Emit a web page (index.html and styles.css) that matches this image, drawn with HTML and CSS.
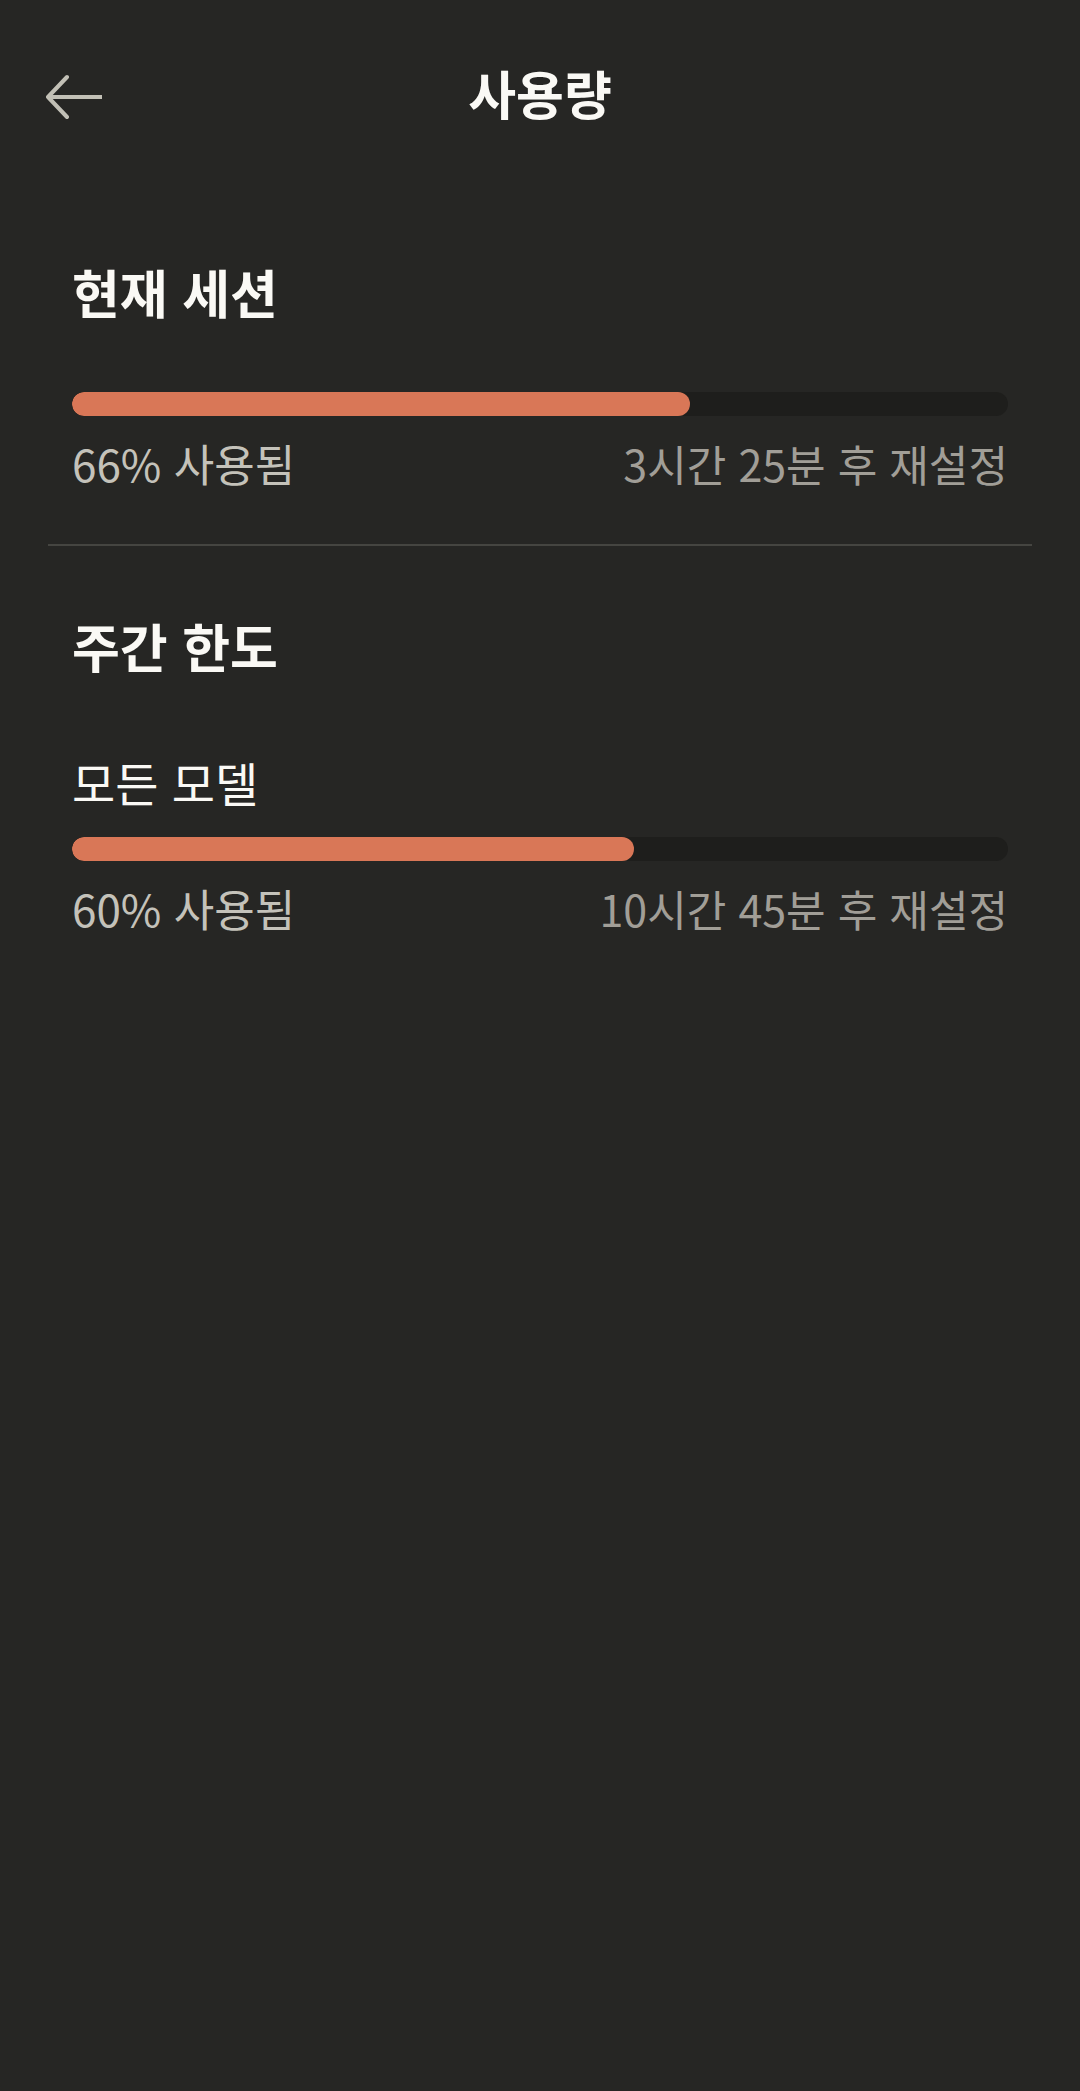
FILE: index.html
```html
<!DOCTYPE html>
<html lang="ko">
<head>
    <meta charset="UTF-8">
    <meta name="viewport" content="width=device-width, initial-scale=1.0">
    <title>사용량</title>
    <link rel="stylesheet" href="styles.css">
</head>
<body>
    <div class="screen">
        <header class="top-bar">
            <button class="back-btn" aria-label="뒤로">
                <svg width="64" height="48" viewBox="0 0 64 48">
                    <path d="M64 25 H10 M29 5 L10 25 L29 45" fill="none" stroke="currentColor" stroke-width="4" stroke-linecap="round" stroke-linejoin="round"/>
                </svg>
            </button>
            <h1 class="page-title">사용량</h1>
        </header>

        <section class="usage-section">
            <h2 class="section-title">현재 세션</h2>
            <div class="usage-item first">
                <div class="bar-track"><div class="bar-fill" style="width: 66%"></div></div>
                <div class="bar-labels">
                    <span class="used">66% 사용됨</span>
                    <span class="reset">3시간 25분 후 재설정</span>
                </div>
            </div>
        </section>

        <section class="usage-section">
            <h2 class="section-title">주간 한도</h2>
            <div class="usage-item">
                <div class="item-name">모든 모델</div>
                <div class="bar-track"><div class="bar-fill" style="width: 60%"></div></div>
                <div class="bar-labels">
                    <span class="used">60% 사용됨</span>
                    <span class="reset">10시간 45분 후 재설정</span>
                </div>
            </div>
        </section>
    </div>
</body>
</html>
```

FILE: styles.css
```css
:root {
    --bg-color: #262624;
    --text-color: #faf9f5;
    --muted-color: #c4c2ba;
    --faint-color: #a19e97;
    --track-color: #1e1e1c;
    --accent: #d97757;
    --line-color: #454541;
}

body {
    margin: 0;
    background-color: var(--bg-color);
    color: var(--text-color);
    font-family: "Noto Sans CJK KR", "Noto Sans", sans-serif;
}

.screen {
    min-height: 2091px;
    padding: 0 48px;
    box-sizing: border-box;
}

.top-bar {
    height: 192px;
    display: flex;
    align-items: center;
    justify-content: center;
    position: relative;
}

.back-btn {
    position: absolute;
    left: -10px;
    top: 72px;
    background: none;
    border: none;
    padding: 0;
    color: #c2c0b6;
    display: flex;
}

.page-title {
    margin: 0 0 6px;
    font-size: 52px;
    font-weight: 700;
    line-height: 60px;
}

.usage-section {
    padding: 70px 24px 52px;
}

.usage-section + .usage-section {
    border-top: 2px solid var(--line-color);
}

.section-title {
    margin: 0;
    font-size: 52px;
    font-weight: 700;
    line-height: 60px;
}

.usage-item {
    margin-top: 80px;
}

.usage-item.first {
    margin-top: 70px;
}

.item-name {
    font-size: 47px;
    line-height: 52px;
    margin-bottom: 29px;
}

.bar-track {
    height: 24px;
    border-radius: 12px;
    background-color: var(--track-color);
    overflow: hidden;
}

.bar-fill {
    height: 100%;
    border-radius: 12px;
    background-color: var(--accent);
}

.bar-labels {
    display: flex;
    justify-content: space-between;
    margin-top: 21px;
    margin-bottom: 3px;
    font-size: 43px;
    line-height: 52px;
}

.used {
    color: var(--muted-color);
    font-size: 44px;
}

.reset {
    color: var(--faint-color);
}
```
